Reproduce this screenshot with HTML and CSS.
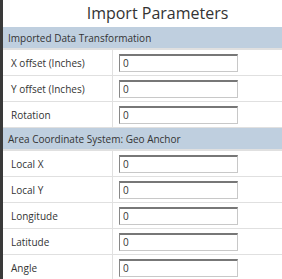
FILE: index.html
```html
<!DOCTYPE html>
<html lang="en">
<head>
  <meta charset="UTF-8">
  <title>Import Parameters</title>
  <link rel="stylesheet" href="styles.css">
</head>
<body>
  <div class="frame">
    <div class="edge"></div>
    <div class="panel">
      <div class="title">Import Parameters</div>
      <table class="params">
        <tr class="group"><td colspan="2">Imported Data Transformation</td></tr>
        <tr><td class="label">X offset (Inches)</td><td class="field"><input type="text" value="0"></td></tr>
        <tr><td class="label">Y offset (Inches)</td><td class="field"><input type="text" value="0"></td></tr>
        <tr><td class="label">Rotation</td><td class="field"><input type="text" value="0"></td></tr>
        <tr class="group"><td colspan="2">Area Coordinate System: Geo Anchor</td></tr>
        <tr><td class="label">Local X</td><td class="field"><input type="text" value="0"></td></tr>
        <tr><td class="label">Local Y</td><td class="field"><input type="text" value="0"></td></tr>
        <tr><td class="label">Longitude</td><td class="field"><input type="text" value="0"></td></tr>
        <tr><td class="label">Latitude</td><td class="field"><input type="text" value="0"></td></tr>
        <tr><td class="label">Angle</td><td class="field"><input type="text" value="0"></td></tr>
      </table>
    </div>
  </div>
</body>
</html>
```
FILE: styles.css
```css
html, body { overflow: hidden; }
body { margin: 0; background: #fff; font-family: "Open Sans", "Liberation Sans", sans-serif; color: #333; }
.frame { display: flex; width: 320px; }
.edge { width: 3px; background: #3a3a3a; flex: none; min-height: 300px; }
.panel { width: 309px; flex: none; }
.title { height: 27px; line-height: 27px; text-align: center; font-size: 16px; color: #333; }
.params { width: 100%; border-collapse: collapse; font-size: 10px; }
.params td { border-bottom: 1px solid #e0e0e0; padding: 0; }
.group td { background: #bfcfdf; height: 21px; padding-left: 5px; border-bottom: 2px solid #e0e0e0; }
.label { width: 101px; height: 25px; padding-left: 8px !important; border-right: 1px solid #e0e0e0; }
.field { padding-left: 6px !important; }
.field input { width: 111px; height: 15px; padding: 0 3px; font: 10px "Open Sans", "Liberation Sans", sans-serif; color: #333; border: 1px solid #c8c8c8; border-top: 2px solid #777; border-left: 1px solid #888; display: block; }
```
